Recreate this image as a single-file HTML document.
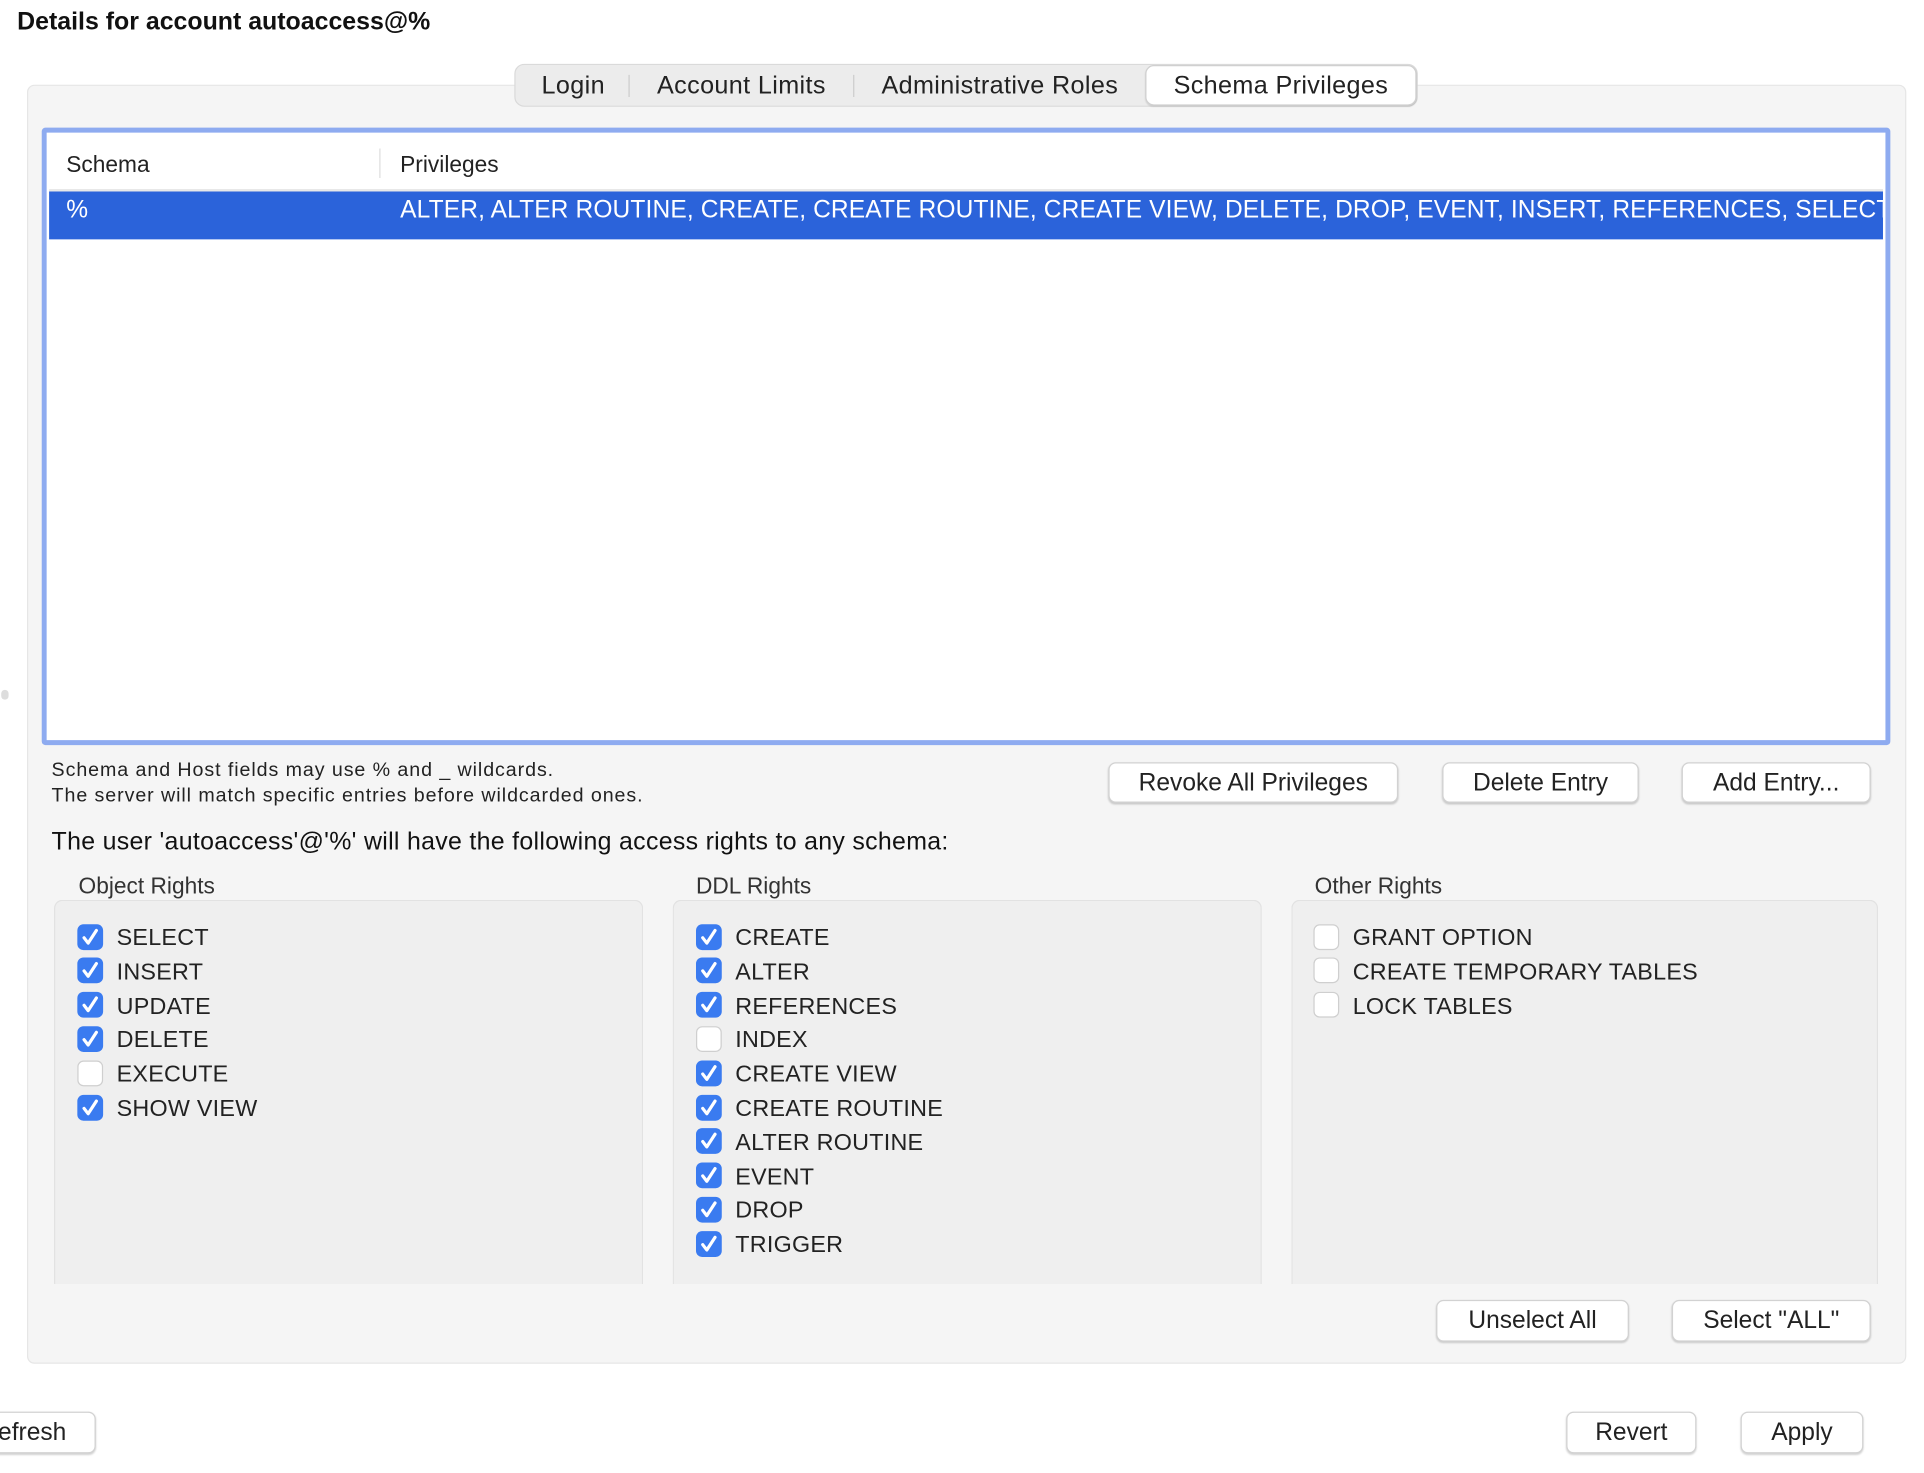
<!DOCTYPE html>
<html><head><meta charset="utf-8"><style>
html,body{margin:0;padding:0;background:#fff;width:1924px;height:1472px;overflow:hidden}
#s{position:absolute;left:0;top:0;width:1568px;height:1200px;transform:scale(1.2275);transform-origin:0 0;font-family:"Liberation Sans",sans-serif;color:#222}
.a{position:absolute;white-space:nowrap}
.btn{position:absolute;background:#fff;border:1px solid #d2d2d2;border-radius:6px;box-shadow:0 1px 1.5px rgba(0,0,0,.18);font-size:20px;text-align:center;color:#222;box-sizing:border-box}
.grp{position:absolute;top:733px;height:313px;width:480px;background:#efefef;border:1px solid #e2e2e2;border-bottom:none;border-radius:7px 7px 0 0;box-sizing:border-box}
.lbl{position:absolute;top:711px;font-size:18.5px;color:#333}
.cb{position:absolute;width:21px;height:21px;border-radius:5px;box-sizing:border-box}
.on{background:#3a7bf0}
.off{background:#fff;border:1px solid #cfcfcf}
.ct{position:absolute;font-size:19px;color:#222;white-space:nowrap;letter-spacing:0.2px}
.tab{position:absolute;top:58px;font-size:20.5px;text-align:center;white-space:nowrap;letter-spacing:0.3px}
</style></head><body><div id="s">
<div class="a" style="left:14px;top:7px;font-size:20.3px;font-weight:bold;color:#111">Details for account autoaccess@%</div>
<div style="position:absolute;left:1px;top:562px;width:6px;height:8px;border-radius:3px;background:#ddd"></div>
<div style="position:absolute;left:22px;top:69px;width:1531px;height:1042px;background:#f5f5f5;border:1px solid #e6e6e6;border-radius:6px;box-sizing:border-box"></div>
<div style="position:absolute;left:419px;top:52px;width:736px;height:35px;background:#ececec;border:1px solid #dadada;border-radius:8px;box-sizing:border-box"></div>
<div style="position:absolute;left:933px;top:53px;width:221px;height:33px;background:#fff;border:1px solid #d0d0d0;border-radius:7px;box-sizing:border-box;box-shadow:0 1px 1px rgba(0,0,0,.1)"></div>
<div style="position:absolute;left:512px;top:61px;width:1px;height:18px;background:#ccc"></div>
<div style="position:absolute;left:695px;top:61px;width:1px;height:18px;background:#ccc"></div>
<div class="tab" style="left:419px;width:96px">Login</div>
<div class="tab" style="left:513px;width:182px">Account Limits</div>
<div class="tab" style="left:696px;width:237px">Administrative Roles</div>
<div class="tab" style="left:933px;width:221px">Schema Privileges</div>
<div style="position:absolute;left:34px;top:104px;width:1506px;height:503px;border:4px solid #8eabf0;border-radius:3px;box-sizing:border-box;background:#fff"></div>
<div class="a" style="left:54px;top:123px;font-size:18.5px">Schema</div>
<div style="position:absolute;left:309px;top:121px;width:1px;height:24px;background:#ddd"></div>
<div class="a" style="left:326px;top:123px;font-size:18.5px">Privileges</div>
<div style="position:absolute;left:40px;top:154px;width:1494px;height:2px;background:#e8e8e8"></div>
<div style="position:absolute;left:40px;top:156px;width:1494px;height:39px;background:#2b63da;overflow:hidden">
<div class="a" style="left:14px;top:4px;font-size:20px;color:#fff">%</div>
<div class="a" style="left:286px;top:4px;font-size:20px;color:#fff;letter-spacing:0.1px">ALTER, ALTER ROUTINE, CREATE, CREATE ROUTINE, CREATE VIEW, DELETE, DROP, EVENT, INSERT, REFERENCES, SELECT, SHOW VIEW, TRIGGER, UPDATE</div>
</div>
<div class="a" style="left:42px;top:619px;font-size:16px;letter-spacing:0.75px;color:#222">Schema and Host fields may use % and _ wildcards.</div>
<div class="a" style="left:42px;top:640px;font-size:16px;letter-spacing:0.75px;color:#222">The server will match specific entries before wildcarded ones.</div>
<div class="btn" style="left:903px;top:621px;width:236px;height:33px;line-height:32px">Revoke All Privileges</div>
<div class="btn" style="left:1175px;top:621px;width:160px;height:33px;line-height:32px">Delete Entry</div>
<div class="btn" style="left:1370px;top:621px;width:154px;height:33px;line-height:32px">Add Entry...</div>
<div class="a" style="left:42px;top:675px;font-size:20.3px;color:#111;letter-spacing:0.25px">The user 'autoaccess'@'%' will have the following access rights to any schema:</div>
<div class="lbl" style="left:64px">Object Rights</div>
<div class="lbl" style="left:567px">DDL Rights</div>
<div class="lbl" style="left:1071px">Other Rights</div>
<div class="grp" style="left:44px"></div>
<div class="grp" style="left:548px"></div>
<div class="grp" style="left:1052px;width:478px"></div>
<svg width="0" height="0" style="position:absolute"><defs><symbol id="ck" viewBox="0 0 21 21"><path d="M5.5 11l3.3 4.3L15.5 5" fill="none" stroke="#fff" stroke-width="2.6" stroke-linecap="round" stroke-linejoin="round"/></symbol></defs></svg>
<div id="cbs"></div>
<div class="btn" style="left:1170px;top:1059px;width:157px;height:34px;line-height:33px">Unselect All</div>
<div class="btn" style="left:1362px;top:1059px;width:162px;height:34px;line-height:33px">Select "ALL"</div>
<div class="btn" style="left:-30px;top:1150px;width:108px;height:34px;line-height:33px;text-align:right;padding-right:23px">Refresh</div>
<div class="btn" style="left:1276px;top:1150px;width:106px;height:34px;line-height:33px">Revert</div>
<div class="btn" style="left:1418px;top:1150px;width:100px;height:34px;line-height:33px">Apply</div>
<script>
var cols=[[63,[["SELECT",1],["INSERT",1],["UPDATE",1],["DELETE",1],["EXECUTE",0],["SHOW VIEW",1]]],
[567,[["CREATE",1],["ALTER",1],["REFERENCES",1],["INDEX",0],["CREATE VIEW",1],["CREATE ROUTINE",1],["ALTER ROUTINE",1],["EVENT",1],["DROP",1],["TRIGGER",1]]],
[1070,[["GRANT OPTION",0],["CREATE TEMPORARY TABLES",0],["LOCK TABLES",0]]]];
var h="";
cols.forEach(function(c){c[1].forEach(function(it,i){var y=752.5+i*27.8;
h+='<div class="cb '+(it[1]?'on':'off')+'" style="left:'+c[0]+'px;top:'+y+'px">'+(it[1]?'<svg width="21" height="21"><use href="#ck"/></svg>':'')+'</div>';
h+='<div class="ct" style="left:'+(c[0]+32)+'px;top:'+(y+1.5)+'px">'+it[0]+'</div>';});});
document.getElementById("cbs").innerHTML=h;
</script>
</div></body></html>
